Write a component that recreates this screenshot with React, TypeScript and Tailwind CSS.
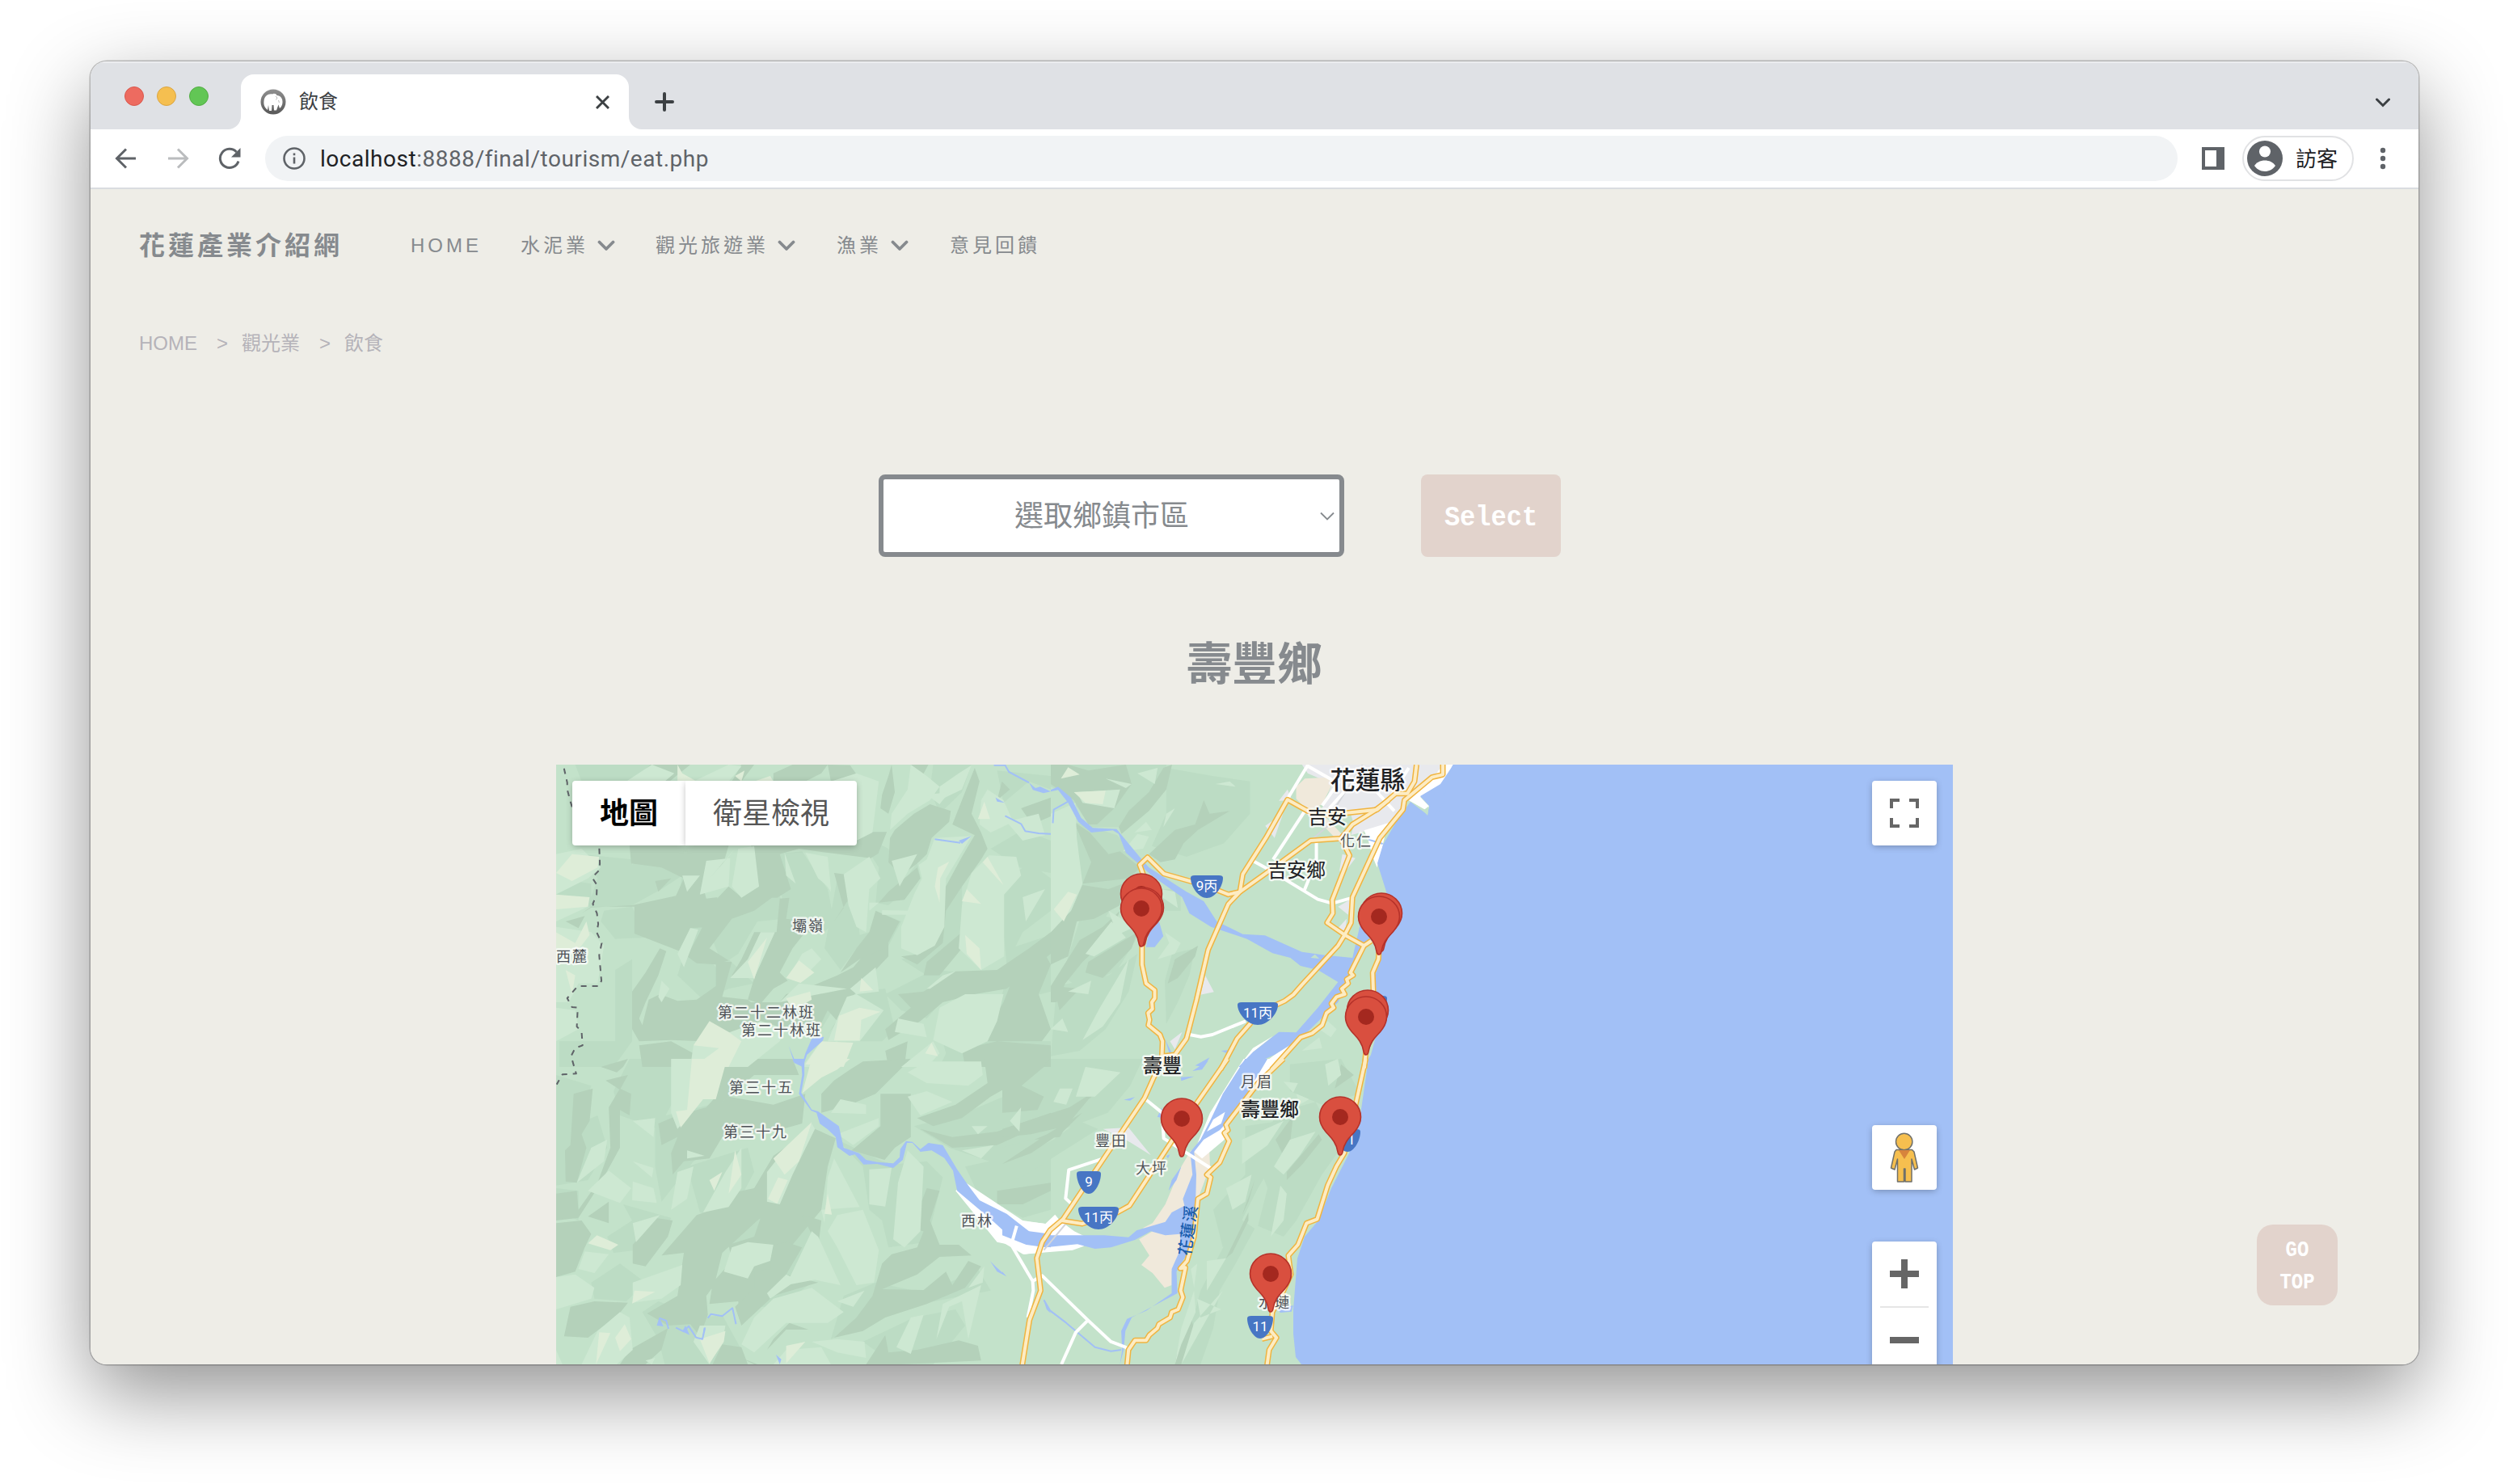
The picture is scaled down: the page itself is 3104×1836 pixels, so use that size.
import React from "react";

const CJK = "font-['Liberation_Sans','Noto_Sans_CJK_TC',sans-serif]";

/* The map is drawn in four sections, each with its own local grid. */
const SECTIONS = {
  nw: "translate(680 940) scale(0.3954 0.33333)",
  ne: "translate(1300 940) scale(0.35714 0.33333)",
  sw: "translate(680 1310) scale(0.3954 0.33333)",
  se: "translate(1240 1310) scale(0.3954 0.33333)",
} as const;
type Section = keyof typeof SECTIONS;
type Shape = [Section, string];

function Fills({ shapes, color, opacity = 1 }: { shapes: Shape[]; color: string; opacity?: number }) {
  return (
    <>
      {shapes.map(([s, d], i) => (
        <path key={i} d={d} transform={SECTIONS[s]} fill={color} fillOpacity={opacity} />
      ))}
    </>
  );
}

function Lines({ shapes, color, width, dash }: { shapes: Shape[]; color: string; width: number; dash?: string }) {
  return (
    <>
      {shapes.map(([s, d], i) => (
        <path key={i} d={d} transform={SECTIONS[s]} fill="none" stroke={color} strokeWidth={width} strokeDasharray={dash} strokeLinejoin="round" vectorEffect="non-scaling-stroke" />
      ))}
    </>
  );
}

const mid: Shape[] = [
  ["nw", "M80 18L320 18 240 80 100 80ZM100 350L258 370 258 545 120 545 150 440ZM20 440L130 460 130 540 20 500ZM258 390L300 340 415 430 350 480 258 540ZM170 560L258 545 300 660 205 665 160 600ZM205 780L258 740 258 1045 205 1045ZM30 1045L258 1045 200 1140 30 1140ZM415 430L530 400 470 520 490 640 410 720 395 560ZM560 500L720 500 735 590 650 600 590 720 540 760 500 640ZM440 640L470 700 520 770 560 740 640 830 560 850 480 890 400 800Z"],
  ["nw", "M700 350L790 340 870 480 890 600 860 640 740 590ZM900 440L960 540 970 650 1000 640 1040 570 1100 600 1060 690 1010 760 960 700 910 780 860 700ZM960 270L1060 330 1100 470 1150 380 1160 440 1060 540 1020 530 1030 400ZM1230 480L1290 440 1290 640 1220 720 1180 800 1100 740 1160 720ZM1420 460L1500 380 1568 440 1568 560 1480 640 1430 760 1420 640ZM1440 700L1568 650 1568 860 1440 900 1400 960 1420 850ZM1050 870L1200 780 1300 790 1240 880 1180 960 1100 930ZM1230 1045L1568 1045 1568 1140 1220 1140 1240 1090ZM960 860L1050 850 1080 1000 1040 1045 960 1045 930 960ZM1200 18L1320 18 1290 120 1220 200 1190 110ZM1400 40L1568 60 1568 110 1500 80 1420 160ZM1380 330L1480 260 1568 300 1568 420 1470 400ZM760 870L850 830 900 900 850 1000 780 960Z"],
  ["sw", "M20 60L130 100 90 240 150 210 180 330 120 450 20 470ZM250 0L380 0 390 150 340 260 220 210 200 120ZM20 480L90 490 90 600 20 560ZM230 540L380 590 340 700 200 720 180 660 258 600ZM130 830L220 760 300 830 240 900 140 890ZM330 220L540 160 520 320 450 380 350 530 330 400ZM430 400L620 330 640 420 560 600 470 570ZM550 570L700 500 730 560 660 680 560 700ZM900 300L1040 380 1100 400 1080 640 1000 560 980 400ZM1000 400L1180 380 1230 440 1180 680 1060 700ZM1140 250L1300 200 1420 140 1568 180 1568 300 1400 390 1250 330ZM1300 400L1568 330 1568 560 1480 590 1340 500ZM640 840L760 770 820 830 720 920 660 920ZM700 700L800 580 850 600 830 780 740 780ZM920 880L1020 830 1180 870 1340 780 1380 860 1160 910 960 1000 880 1040ZM980 1050L1140 960 1270 930 1300 990 1200 1134 1080 1134ZM290 940L340 900 480 960 540 950 600 1080 540 1134 360 1134 340 1040Z"],
  ["ne", "M0 18L400 18 400 110 340 180 240 250 140 250 60 130 0 100ZM400 30L560 60 690 80 690 200 600 310 470 360 350 320 400 200ZM80 230L230 280 320 400 240 500 180 600 100 560 60 400ZM110 560L260 600 300 660 230 780 100 850 40 800ZM20 840L200 800 300 720 270 860 190 1000 100 1080 0 1100ZM420 720L500 700 480 800 440 900 400 980 395 820ZM330 480L450 480 450 560 380 560Z"],
  ["se", "M0 0L440 0 400 100 330 200 220 250 120 290 0 330ZM0 390L160 300 240 230 300 260 180 350 60 440 0 460ZM760 250L870 230 870 340 800 480 740 620 690 700 660 560 760 430ZM860 200L980 160 1060 330 1000 430 920 600 880 660 800 620 830 480 790 360ZM620 860L740 590 790 630 730 760 660 900 600 1134 560 1134ZM540 1134L600 940 680 860 660 1000 620 1134ZM900 20L1060 0 1120 130 1000 170 900 120Z"],
];

const dark: Shape[] = [
  ["nw", "M315 18L440 18 375 80 260 80ZM600 18L640 18 600 80 570 80ZM760 18L870 18 850 50 800 80 700 80 700 50ZM870 18L940 20 1005 130 980 128 960 80 880 80ZM1040 130L1060 60 1070 18 1080 120 1060 200 1035 180ZM1130 18L1185 18 1165 62 1140 50Z"],
  ["nw", "M250 318L560 318 540 400 505 395 480 470 490 515 525 510 500 620 440 625 410 712 265 645 265 545 130 545 100 570 130 548 258 540 395 505 420 440 350 400 255 385ZM630 318L870 318 960 318 960 268 1055 268 1028 348 1005 365 870 345 780 330 720 350 755 480 712 512 695 512 640 560 570 590 500 700 560 745 520 760 460 755 430 730 470 640 520 520 560 470 600 510 655 470Z"],
  ["nw", "M720 515L750 512 740 590 810 600 860 645 800 640 760 700 720 790 745 820 700 850 660 905 620 890 640 810 570 800 600 740 640 640 710 640Z"],
  ["nw", "M258 860L300 790 345 700 365 710 340 800 300 900 280 960 290 985 310 890 345 870 400 895 460 890 520 840 520 750 570 750 540 880 620 890 630 900 720 900 740 870 800 850 900 800 950 770 1000 700 1040 600 1095 600 1060 670 1060 730 1020 780 1025 860 960 860 870 1020 900 970 870 930 840 1000 740 990 700 1050 560 1140 440 1140 480 1045 380 1040 280 1045 258 1000Z"],
  ["nw", "M890 420L925 425 945 500 890 600 920 550ZM1080 260L1140 200 1190 165 1255 190 1250 230 1195 290 1180 350 1150 385 1100 430 1060 380 1065 290ZM1260 240L1290 150 1330 30 1345 80 1320 200 1350 270 1370 330 1350 370 1290 470 1240 560 1230 680 1150 760 1100 730 1160 720 1230 600 1235 480 1290 360 1330 280ZM1150 400L1160 440 1110 520 1030 530 1060 490ZM1020 560L1095 600 1050 700 970 740 910 790 960 700 1000 640Z"],
  ["nw", "M1170 860L1270 785 1400 780 1500 700 1568 640 1568 720 1430 850 1330 870 1230 900 1160 970 1060 1040 1050 1000 1130 920 1090 870ZM1420 900L1480 720 1530 680 1568 760 1530 870 1568 1000 1540 1045 1370 1045 1390 960ZM1475 180L1568 140 1568 210 1510 240ZM1400 150L1415 80 1440 110ZM1290 1075L1400 1045 1568 1060 1568 1140 1300 1140ZM1170 800L1180 750 1290 640 1290 700 1220 800ZM280 1060L380 1045 450 1090 440 1140 290 1140ZM1050 1080L1120 1045 1110 1140 1060 1140ZM50 600L110 580 90 625ZM330 450L380 440 340 490Z"],
  ["sw", "M75 130L135 110 125 230 100 280 115 330 85 460 50 455 48 340 65 320ZM185 180L220 110 255 130 250 210 220 190 220 330 155 470 90 590 20 600 20 500 85 490 90 560 150 460 190 330ZM160 30L245 0 230 30 210 50ZM175 80L245 60 220 115ZM340 240L400 210 490 180 520 140 540 0 760 0 780 60 640 60 520 180 560 140 700 170 800 130 790 240 700 270 540 290 500 370 420 380 385 430 380 350 400 290 350 320Z"],
  ["sw", "M20 610L100 600 130 650 110 700 80 790 20 810ZM260 690L330 590 385 600 370 660 300 770 260 760ZM120 585L185 530 185 610ZM45 1030L65 920 140 900 245 905 215 950 120 1035ZM305 945L400 880 420 720 350 730 460 580 560 540 560 500 640 480 700 360 760 310 830 260 895 295 870 400 850 560 760 690 740 780 680 860 600 980 590 900 500 910 510 830 570 750 560 690 640 660 680 520 720 540 650 600 540 720 515 840 490 880 495 950 470 1030 440 985 370 990Z"],
  ["sw", "M850 130L890 80 940 40 980 10 1130 0 1020 130 940 170 850 200ZM1035 130L1130 130 1130 290 1080 330 1048 375 945 340 1035 250ZM1150 220L1270 170 1370 90 1360 0 1568 0 1500 60 1440 100 1380 140 1290 220 1200 250ZM1160 260L1260 290 1400 270 1568 200 1568 230 1400 320 1260 330ZM1400 490L1568 460 1568 490 1480 540 1400 540ZM850 600L840 700 790 580ZM740 680L790 700 740 800 840 830 700 880 600 990 580 920 640 850 640 790 690 780 700 690Z"],
  ["sw", "M890 1035L960 960 1010 880 1040 760 1070 725 1150 700 1170 640 1130 630 1180 480 1220 490 1190 600 1220 690 1280 690 1320 730 1220 735 1150 800 1040 855 1170 858 1240 790 1260 840 1310 750 1350 770 1300 850 1180 910 1050 960 980 1010ZM1150 1080L1280 1045 1340 1065 1350 1120 1100 1134 990 1134 1050 1025 1060 1090ZM700 1040L750 980 810 1005 740 1005 680 1080ZM250 1080L370 1000 350 1080 300 1134 220 1134ZM540 1060L600 1070 620 1134 510 1134ZM600 1110L650 1134 640 1134Z"],
  ["ne", "M0 18L60 18 130 40 260 18 280 90 220 180 160 240 130 240 80 150 0 90ZM390 30L420 18 400 110 340 190 245 275 235 250 270 190 340 120ZM530 150L550 200 620 190 510 260 460 310 430 370 380 380 340 350 430 260 500 240ZM80 230L135 270 200 350 240 340 310 400 270 440 110 460 140 380ZM110 465L200 480 250 460 240 540 150 590 90 600 60 730 0 760 0 640 70 560ZM240 560L200 660 110 750 50 830 20 900 0 900 0 840 100 670 180 620ZM130 750L300 640 280 700 180 810 120 790ZM10 840L100 850 30 930ZM430 740L510 690 500 730 440 810 405 830Z"],
  ["se", "M0 20L140 20 60 100 130 140 110 190 0 200ZM210 180L330 90 270 150 200 250 90 280 0 290 0 260ZM0 390L140 280 250 200 190 270 90 350ZM100 300L200 250 180 290ZM1060 20L1100 60 1040 110ZM855 300L910 210 900 320 880 360ZM890 420L990 280 1000 300 940 390 890 450ZM750 580L790 450 770 530ZM700 740L770 570 770 600 720 720ZM545 1100L590 960 605 1020 560 1134 540 1134Z"],
];

const light: Shape[] = [
  ["nw", "M240 80L320 18 390 50 360 80ZM450 80L560 18 600 25 560 80ZM880 80L960 50 1030 80 1010 270 960 300 960 120ZM1070 200L1120 110 1130 18 1180 60 1220 100 1190 150 1120 200 1065 260ZM1220 100L1280 50 1320 20 1290 110 1220 150ZM1205 290L1320 283 1240 440 1235 620 1205 690 1150 725 1100 700 1100 620 1140 500 1165 440 1155 390 1180 370ZM1320 420L1375 355 1460 360 1475 430 1422 500 1422 730 1350 780 1280 700 1290 540ZM1345 240L1350 150 1370 110 1420 150 1450 230 1380 270Z"],
  ["nw", "M490 375L565 365 560 470 470 500ZM590 330L640 320 655 470 600 512 570 470ZM735 345L770 460 740 430ZM800 345L870 360 880 480 840 440ZM920 425L1000 360 1035 440 1000 480 990 640 960 620 935 540ZM1000 530L1030 530 1000 560ZM1040 558L1130 560 1120 575 1040 575ZM1070 375L1150 350 1095 470ZM1430 230L1530 200 1550 280 1480 300ZM1480 510L1550 480 1490 600ZM660 640L705 640 640 810 565 810 620 740ZM580 330L500 440 560 360ZM820 700L850 740 800 800 745 810 790 720ZM415 430L470 430 430 490ZM440 625L465 630 420 770 400 720Z"],
  ["nw", "M20 350L100 330 160 400 120 440 20 500ZM20 500L120 545 20 600ZM20 620L130 640 170 690 150 830 90 830 60 900 20 900ZM20 920L80 930 90 1000 20 1045ZM350 820L375 850 350 900 340 880ZM1020 770L1030 860 960 870 940 850ZM1220 920L1300 870 1420 870 1400 970 1370 1045 1290 1090 1200 1040ZM1180 850L1230 800 1270 785 1190 850ZM930 880L960 870 1045 930 970 1045 870 1045 900 960ZM660 970L740 1000 720 1045 620 1140 440 1140 450 1060ZM930 850L800 880 720 900 780 830ZM1090 960L1170 980 1180 1030 1080 1010ZM1100 1140L1200 1045 1220 1090 1180 1140ZM840 1060L900 1045 900 1140 790 1140ZM870 370L880 490 840 420ZM1180 130L1250 120 1220 165Z"],
  ["sw", "M120 490L185 415 255 480 220 535ZM260 455L325 480 335 535 258 525ZM260 380L325 405 320 440ZM85 460L130 330 180 300 170 380ZM380 0L540 0 520 140 480 150 400 260 380 200ZM260 230L330 220 325 290ZM400 420L450 400 430 520 380 560ZM430 340L485 360 430 370ZM260 610L345 580 270 680ZM90 780L110 715 185 725 140 795ZM20 810L80 800 140 850 130 890 20 930ZM260 830L415 765 410 840 350 890 260 905ZM545 790L570 700 620 680 700 690 690 750 640 770 620 815Z"],
  ["sw", "M680 420L740 330 820 240 830 260 760 430 720 540 680 530ZM480 570L550 420 600 330 600 480 560 550ZM860 610L870 440 890 370 970 550 850 560ZM870 640L900 580 980 560 1030 710 1015 830 960 840 900 700ZM1000 410L1070 405 1050 548 1000 540ZM1090 460L1120 340 1170 400 1160 640 1110 700 1075 670ZM740 840L820 640 840 660 910 840 830 820ZM680 870L740 800 775 820 690 890ZM640 960L700 890 820 850 920 940 870 980 740 980 640 1090 600 1060ZM880 200L910 150 990 170 990 205ZM900 280L1030 220 1030 250 950 320ZM1120 140L1180 120 1260 160 1160 210ZM1120 50L1180 10 1350 10 1355 60 1310 100 1180 90Z"],
  ["sw", "M1230 910L1350 840 1310 1040 1290 900 1250 920 1210 1040ZM1130 960L1170 950 1130 1095 1085 1070ZM820 1050L900 1040 985 1050 990 1110 900 1090ZM700 1134L740 1080 850 1070 880 1134ZM1290 340L1390 320 1350 370ZM1440 230L1475 180 1470 270ZM1320 250L1370 250 1340 280ZM900 900L985 860 950 920ZM450 1050L470 990 550 990 540 1050 500 1134ZM100 1134L150 1010 220 940 250 960 260 1080 210 1134ZM20 1080L40 1134 20 1134ZM300 1120L330 1110 320 1134ZM1310 850L1360 770 1355 830Z"],
  ["ne", "M90 120L240 110 220 180 110 160ZM190 70L280 90 260 105ZM300 50L370 30 360 90ZM330 230L350 260 290 270ZM0 200L85 160 90 290 110 460 70 560 0 640ZM300 275L340 285 320 330 250 340ZM400 200L430 180 390 250ZM570 90L620 80 640 100ZM200 560L290 620 230 650ZM120 720L210 600 260 660 150 730ZM170 920L270 740 240 900 180 990 110 1040ZM60 860L140 820 130 870ZM395 640L450 680 430 720 370 740 410 680ZM330 470L430 490 440 550ZM930 1000L960 970 990 1000 970 1030ZM0 1000L40 960 60 1010ZM870 1080L930 1030 940 1070Z"],
  ["se", "M180 110L220 110 200 170 160 160ZM260 30L370 50 290 140 230 140ZM750 300L880 230 830 320 750 390ZM700 480L780 430 760 530 720 560ZM850 400L900 300 980 270 930 360 880 430ZM840 660L870 470 890 500 880 600ZM880 85L925 90 910 125ZM920 130L960 150 930 170ZM540 1134L560 1000 600 860 605 940 560 1060ZM560 1134L690 860 600 980ZM620 960L610 890 685 930ZM640 750L700 740 640 860ZM1010 20L1050 0 1060 60 1020 100ZM590 780L610 760 600 850Z"],
];

const cream: Shape[] = [
  ["nw", "M400 18L415 50 460 80 400 80ZM690 60L700 80 640 80ZM580 60L610 40 600 80ZM70 350L155 360 150 400 70 450 20 420ZM20 500L125 510 120 545 20 555ZM20 640L80 680 115 600 125 650 80 720 20 700ZM50 780L80 800 70 870ZM1215 400L1250 378 1222 440 1220 530 1205 470ZM1355 380L1370 360 1420 465 1400 440ZM1305 480L1350 535 1290 525ZM1300 650L1345 700 1350 780 1305 720ZM1360 155L1378 220 1340 220ZM680 660L640 815 620 750ZM780 745L828 790 785 828 740 810ZM975 810L1012 855 970 860ZM905 950L970 920 1035 935 975 965 970 1042 890 1042ZM500 970L560 1010 600 1045 560 1140 450 1140 530 1070 450 1060ZM1195 1050L1215 1100 1175 1090ZM800 1130L850 1045 950 1050 920 1140ZM740 885L815 860 820 890 760 930Z"],
  ["sw", "M445 0L555 0 520 150 480 150 410 255 395 195 430 190ZM815 20L860 0 940 0 900 40 850 70 790 128ZM700 370L820 235 780 380 735 430ZM715 440L745 450 712 538 683 520ZM580 340L600 430 560 500ZM500 450L540 420 515 490ZM148 655L215 690 190 710 120 685ZM265 860L330 865 258 908ZM155 1015L190 1018 145 1134ZM235 985L255 1040 220 1085 205 1035ZM470 1040L550 1010 545 1050 500 1130ZM870 500L883 578 860 575ZM740 1065L800 1050 740 1130Z"],
  ["ne", "M60 28L100 55 35 70ZM80 120L190 115 180 165 120 160ZM10 555L60 490 90 500 45 600Z"],
];

const white: Shape[] = [
  ["sw", "M1305 462L1480 600 1568 615 1568 715 1485 725 1440 690 1400 680 1270 490Z"],
  ["se", "M0 550L50 600 135 612 165 578 180 600 225 640 255 657 255 695 220 710 65 725 0 680Z"],
  ["se", "M755 0L880 0 785 115 700 245 695 300 625 370 600 345 650 200Z"],
  ["ne", "M700 1070L770 1025 700 1085 680 1140 650 1140ZM775 1095L865 1030 865 1040 775 1140 720 1140Z"],
  ["ne", "M1395 18L1398 18 1350 95 1280 138 1310 172 1305 190 1240 150 1320 70 1360 18ZM1085 262L1168 235 1150 315 1100 300ZM1100 300L1152 312 1130 400 1115 360Z"],
];

const sand: Shape[] = [
  ["se", "M590 340L648 345 650 400 612 520 600 660 560 740 530 790 530 840 508 850 470 795 435 765 460 730 428 670 470 640 440 628 470 610 510 540 560 400Z"],
  ["ne", "M850 100L880 70 960 65 975 90 940 165 890 190 850 145ZM870 190L950 210 1020 290 980 285 945 245Z"],
];

const urban: Shape[] = [
  ["ne", "M870 18L1358 18 1330 65 1230 150 1190 235 1040 280 1050 240 1040 205 940 180 975 90 890 50Z"],
  ["ne", "M820 110L835 150 790 152ZM743 245L805 198 775 290ZM518 872L535 800 565 862ZM995 545L1038 518 1030 575ZM988 632L1025 590 1020 640ZM1000 410L1010 350 1055 365 1010 430ZM413 1045L455 1010 430 1075Z"],
  ["se", "M315 260L395 255 465 358 400 310 370 290Z"],
];

const water: Shape[] = [
  ["ne", "M0 112L25 100 70 140 105 215 145 253 228 257 315 370 340 400 420 455 470 490 530 525 575 600 665 647 742 652 870 713 950 725 1045 735 1072 610 1125 620 1110 675 1085 700 995 900 865 1035 775 1095 680 1140 650 1140 700 1085 790 1010 850 1012 925 920 995 825 925 780 865 765 830 735 768 718 680 665 555 620 480 570 455 510 350 430 260 345 235 275 215 262 140 270 95 230 60 160 25 112 0 118Z"],
  ["ne", "M330 695L360 695 390 655 375 600 340 640ZM395 1035L422 1095 412 1095ZM500 1135L550 1105 530 1140ZM590 1080L640 1075 610 1090Z"],
  ["se", "M0 570L80 640 130 655 320 655 395 662 420 637 510 605 530 570 570 545 565 520 595 430 590 370 585 350 620 300 650 230 690 130 760 0 830 0 770 120 725 200 700 240 680 265 630 300 600 345 607 430 605 520 600 660 580 720 545 790 548 870 405 960 385 1010 380 1080 368 1134 375 1080 372 1010 390 965 450 935 530 870 530 780 560 700 555 650 510 655 465 640 415 672 340 700 290 705 235 688 135 700 75 690 0 655Z"],
  ["se", "M560 400L545 450 520 490 530 450ZM380 152L415 142 400 155ZM595 45L645 5 625 40ZM558 68L600 65 560 82ZM860 930L910 915 905 938 870 942ZM485 215L500 180 500 220ZM513 360L525 355 518 370ZM0 790L12 806 0 798Z"],
  ["sw", "M762 0L797 0 797 60 787 125 820 188 840 195 905 250 920 330 968 350 990 375 1025 383 1075 388 1095 365 1097 335 1115 305 1135 308 1160 335 1185 312 1230 320 1275 410 1310 470 1345 525 1430 575 1500 640 1568 650 1568 700 1490 685 1440 660 1385 600 1275 490 1262 415 1235 368 1195 340 1160 345 1135 312 1118 312 1105 375 1075 405 1025 390 982 392 955 355 938 360 900 328 895 290 870 262 845 240 835 200 818 192 780 130 790 60 788 25 762 10Z"],
  ["sw", "M335 990L343 960 356 993ZM415 1012L425 990 438 1025ZM478 1035L482 998 488 996ZM1378 750L1395 770 1430 808 1400 790ZM1545 895L1568 945 1555 930ZM708 1098L725 1115 720 1134Z"],
  ["nw", "M748 1062L765 1110 790 1130 800 1090 820 1035 858 1028 855 1042 805 1095 792 1140 765 1125ZM1500 85L1520 105 1535 100 1568 118 1545 124 1512 112ZM1280 300L1320 283 1290 312ZM1395 140L1424 160 1400 155Z"],
];

const streams: Shape[] = [
  ["nw", "M1390 20L1425 20 1437 45 1500 85M1425 208L1475 238 1488 265 1530 273 1568 275M1205 295L1285 308"],
  ["ne", "M7 235L10 185 65 152M1395 20L1365 95 1362 155 1330 210M1100 296L1150 312"],
  ["sw", "M343 962L365 972 372 1002M395 998L420 1012 435 992 458 1034 478 1040 486 1000M495 962L505 947 540 955 572 925 583 985"],
  ["se", "M130 895L150 935 200 980 290 1070 340 1085 372 1080"],
];

const streets: Shape[] = [
  ["ne", "M890 20L820 145M885 20L975 75M880 190L770 370M700 375L760 410 805 440 925 518 975 533 1045 512M920 305L920 385M895 440L878 485M480 1020L520 1028 560 1020 675 970M1000 80L940 170M1015 120L965 180M1130 120L1190 190M1240 30L1170 150"],
  ["se", "M448 150L500 200 505 295 655 408M315 370L208 412 198 518 222 545M45 620L28 690 95 825 97 860 80 960M95 825L125 805 268 970 340 1050 385 1070 397 1080M268 970L230 1015 185 1134"],
];

const roads: Shape[] = [
  ["ne", "M320 425L308 390 335 362 392 423 540 468 615 500 655 490"],
  ["ne", "M1267 18L1260 80 1235 125 1195 125 1130 185 960 205 890 190 820 148 745 290 665 425 655 490 615 535 545 705 505 890 470 1035 430 1095 385 1100 378 1140"],
  ["ne", "M655 490L760 410 900 300 1005 292 1045 240 1120 190 1170 150"],
  ["ne", "M1005 292L1035 355 975 520 977 570 957 605 1018 650 1085 690 1110 672"],
  ["ne", "M1358 18L1358 55 1320 65 1225 150 1220 185 1140 290 1045 510 1040 605 1018 650 995 690 870 835 840 872 810 895 720 940 690 980 645 1035 588 1150"],
  ["ne", "M1085 690L1038 790 1047 800 1025 815 1030 830 1008 850 1018 870 990 880 972 905 980 920 955 940 940 985 905 1015 865 1030 765 1150"],
  ["ne", "M316 680L316 760 330 830 360 855 360 885 350 900 352 925 337 940 342 965 338 985 378 1020 387 1045 385 1100"],
  ["ne", "M1137 700L1135 740 1115 790 1118 880M1092 1080L1086 1145"],
  ["se", "M705 0L605 170 525 315 398 545 360 570 250 612 185 600"],
  ["se", "M880 0L800 90 700 245 706 265 695 275 710 305 680 385 640 430 652 440 640 500 612 520 600 660 578 750 557 778 573 775 558 860 565 885 550 930 530 940 525 960 490 985 485 1000 460 1025 450 1045 415 1045 395 1080 390 1140"],
  ["se", "M500 0L445 145 235 515 190 595 150 635 125 680 108 740 120 860 85 970 62 1140"],
  ["se", "M1137 0L1100 200 1070 350 1045 400 1018 470 985 595 952 610 925 690 895 730 903 800 880 860 845 940 840 1010 858 1035 835 1080 828 1140M812 1040L845 1030"],
];

const county: Shape[] = [
  ["nw", "M45 32L55 85 55 110 65 155 85 230 155 320 157 385 155 410 133 437 148 465 147 500 135 535 148 570 152 610 147 640 163 680 155 725 162 820 155 840 88 840 55 885 70 918 88 920 85 990 100 1010 103 1060 80 1070 67 1100 83 1165 40 1168 22 1205"],
];

type Label = { t: string; x: number; y: number; s: number; c: string; w?: number; ls?: number };
const small = { s: 18, c: "#4d5156", ls: 2 };
const labels: Label[] = [
  { t: "花蓮縣", x: 1692, y: 965, s: 31, c: "#202124", w: 500 },
  { t: "吉安", x: 1642, y: 1010, s: 24, c: "#202124" },
  { t: "吉安鄉", x: 1604, y: 1076, s: 24, c: "#202124" },
  { t: "化仁", x: 1678, y: 1040, ...small },
  { t: "壩嶺", x: 1000, y: 1145, ...small },
  { t: "西麓", x: 708, y: 1183, ...small },
  { t: "第二十二林班", x: 948, y: 1252, ...small },
  { t: "第二十林班", x: 967, y: 1274, ...small },
  { t: "第三十五", x: 942, y: 1345, ...small },
  { t: "第三十九", x: 935, y: 1400, ...small },
  { t: "西林", x: 1209, y: 1510, ...small },
  { t: "壽豐", x: 1438, y: 1318, s: 24, c: "#202124", w: 500 },
  { t: "月眉", x: 1555, y: 1338, ...small },
  { t: "壽豐鄉", x: 1571, y: 1372, s: 24, c: "#202124", w: 500 },
  { t: "豐田", x: 1375, y: 1411, ...small },
  { t: "大坪", x: 1425, y: 1445, ...small },
  { t: "水璉", x: 1577, y: 1611, ...small },
];

const shields = [
  { t: "9丙", x: 1493, y: 1097, w: 40 },
  { t: "11丙", x: 1556, y: 1254, w: 50 },
  { t: "9", x: 1347, y: 1463, w: 30 },
  { t: "11丙", x: 1359, y: 1507, w: 50 },
  { t: "11", x: 1559, y: 1642, w: 32 },
  { t: "11", x: 1667, y: 1411, w: 32 },
  { t: "11", x: 1700, y: 1246, w: 32 },
];

const pins: [number, number][] = [
  [1412, 1154], [1414, 1171], [1412, 1172],
  [1709, 1178], [1706, 1182],
  [1692, 1298], [1690, 1306],
  [1462, 1432], [1658, 1430], [1572, 1624],
];

function TerrainMap() {
  return (
    <svg viewBox="688 946 1728 742" className="block h-[742px] w-[1728px]">
      <rect x="688" y="946" width="1728" height="742" fill="#c3e2ca" />
      <Fills shapes={mid} color="#bcdcc4" />
      <Fills shapes={dark} color="#b4d1ba" />
      <Fills shapes={light} color="#cde8d2" />
      <Fills shapes={cream} color="#deedd8" />
      <Fills shapes={urban} color="#e8e9ed" />
      <Fills shapes={sand} color="#f0e9db" />
      <Fills shapes={white} color="#ffffff" />
      <Fills shapes={water} color="#a2c0f6" />
      <path
        d="M1798 946L1782 970 1757 985 1768 997 1766 1008 1745 992 1730 1012 1711 1045 1704 1068 1715 1103 1716 1127 1707 1190 1701 1207 1703 1233 1708 1260 1696 1305 1693 1310 1681 1393 1669 1427 1647 1470 1631 1510 1614 1530 1605 1557 1600 1620 1600 1650 1603 1679 1610 1688H2416V946Z"
        fill="#a2c0f6"
      />
      <Fills shapes={[["se", "M640 270L660 225 697 197 685 240Z"]]} color="#ffffff" />
      <Fills shapes={[["ne", "M1240 150L1275 138 1310 172 1305 190Z"]]} color="#ffffff" />
      <Fills shapes={[["ne", "M1290 188L1310 172 1305 207ZM900 735L915 722 930 738Z"]]} color="#c3e2ca" />
      <Lines shapes={streams} color="#a2c0f6" width={2} />
      <Lines shapes={county} color="#5f6368" width={2} dash="7 7" />
      <Lines shapes={[["se", "M200 610L130 710"], ["ne", "M900 300L960 245M1080 18L990 170"]]} color="#d3d5da" width={2} />
      <Lines shapes={streets} color="#ffffff" width={4} />
      <Lines shapes={roads} color="#f0b440" width={7} />
      <Lines shapes={roads} color="#fdecc3" width={4} />
      <g fontFamily="Roboto, 'Noto Sans CJK TC', sans-serif" textAnchor="middle">
        {labels.map((l) => (
          <text key={l.t} x={l.x} y={l.y + l.s * 0.37} fontSize={l.s} fill={l.c} fontWeight={l.w ?? 400} letterSpacing={l.ls ?? 0} stroke="#ffffff" strokeOpacity={0.75} strokeWidth={5} strokeLinejoin="round" paintOrder="stroke">
            {l.t}
          </text>
        ))}
        <text transform="translate(1477 1523) rotate(-82)" fontSize={20} letterSpacing={1} fill="#1a5dae" fontWeight={500}>
          花蓮溪
        </text>
        {shields.map((s, i) => (
          <g key={i} transform={`translate(${s.x} ${s.y})`}>
            <path
              d={`M${-s.w / 2} -11Q${-s.w / 2} -14 ${-s.w / 2 + 5} -14H${s.w / 2 - 5}Q${s.w / 2} -14 ${s.w / 2} -11C${s.w / 2} 0 ${s.w / 4} 14 0 14C${-s.w / 4} 14 ${-s.w / 2} 0 ${-s.w / 2} -11Z`}
              fill="#4776c4"
            />
            <text y={5} fontSize={17} fill="#ffffff">{s.t}</text>
          </g>
        ))}
      </g>
      {pins.map(([x, y], i) => (
        <g key={i} transform={`translate(${x} ${y})`}>
          <path
            d="M0 -1C-1.5 -1 -2.5 -2 -3 -5C-5 -18 -13 -24 -18 -30C-23 -36 -25.5 -41 -25.5 -48A25.5 25 0 0 1 25.5 -48C25.5 -41 23 -36 18 -30C13 -24 5 -18 3 -5C2.500 -2 1.5 -1 0 -1Z"
            fill="#d94f3f"
            stroke="#b5322a"
            strokeWidth="1.6"
          />
          <circle cy="-48" r="10" fill="#a4281f" />
        </g>
      ))}
    </svg>
  );
}

function NavChevron() {
  return (
    <svg viewBox="0 0 22 14" className="h-[14px] w-[22px]" fill="none" stroke="#868a8e" strokeWidth="3.8" strokeLinecap="round" strokeLinejoin="round">
      <path d="M2.500 2.500 11 11 19.500 2.500" />
    </svg>
  );
}

function TabStrip() {
  return (
    <div className="flex h-[84px] items-start bg-[#dfe1e5] pl-[42px] pr-[35px] shadow-[inset_0_2px_0_#ebecef]">
      <div className="flex gap-4 pt-[31px]">
        <i className="size-6 rounded-full border border-[#d9574c] bg-[#ed6b60]" />
        <i className="size-6 rounded-full border border-[#dba541] bg-[#f5bf50]" />
        <i className="size-6 rounded-full border border-[#52ac43] bg-[#62c655]" />
      </div>
      <div className="relative ml-[40px] mt-4 flex h-[68px] w-[480px] items-center rounded-t-[16px] bg-white pl-[24px] pr-[24px]">
        <svg viewBox="0 0 16 16" className="absolute -left-4 bottom-0 size-4 fill-white"><path d="M16 0V16H0A16 16 0 0 0 16 0Z" /></svg>
        <svg viewBox="0 0 16 16" className="absolute -right-4 bottom-0 size-4 fill-white"><path d="M0 0V16H16A16 16 0 0 1 0 0Z" /></svg>
        <svg viewBox="0 0 32 32" className="size-8">
          <defs>
            <linearGradient id="fav" x1="0" y1="0" x2="0" y2="1">
              <stop offset="0" stopColor="#909090" />
              <stop offset="1" stopColor="#585858" />
            </linearGradient>
          </defs>
          <circle cx="16" cy="16" r="15.500" fill="url(#fav)" />
          <path d="M9 26C5 23 4 19 4.500 15 5 9 10 5.500 15 6.500 16.500 5 20 6 20.500 8 25 8 28 12 27.500 17 27.300 20 26 22.500 24 24L22.500 19.500 20 26.500H17L16.500 20 14.500 20 14 27H11L10 20Z" fill="#fff" />
          <path d="M19 9L21 11 19.500 13.500M22.500 14L23.500 17" stroke="#aaa" strokeWidth="0.800" fill="none" />
        </svg>
        <span className="ml-[16px] text-2xl text-[#3c4043]">飲食</span>
        <svg viewBox="0 0 17 17" className="ml-auto size-[17px]" stroke="#3c4043" strokeWidth="2.900"><path d="M1 1 16 16M16 1 1 16" /></svg>
      </div>
      <svg viewBox="0 0 24 24" className="ml-[32px] mt-[38px] size-6" stroke="#3c4043" strokeWidth="4" strokeLinecap="round"><path d="M12 2V22M2 12H22" /></svg>
      <svg viewBox="0 0 18 12" className="ml-auto mt-[45px] h-3 w-[18px]" fill="none" stroke="#3c4043" strokeWidth="3" strokeLinecap="round"><path d="M1.500 2 9 9.500 16.500 2" /></svg>
    </div>
  );
}

function Toolbar() {
  return (
    <div className="flex h-[74px] items-center border-b-2 border-[#dadce0] bg-white pl-[30px] pr-[40px]">
      <svg viewBox="0 0 28 28" className="size-7" fill="none" stroke="#5f6368" strokeWidth="3"><path d="M26 14H3M14 2.500 2.500 14 14 25.500" /></svg>
      <svg viewBox="0 0 28 28" className="ml-[36px] size-7" fill="none" stroke="#babcbe" strokeWidth="3"><path d="M2 14H25M14 2.500 25.500 14 14 25.500" /></svg>
      <svg viewBox="0 0 28 28" className="ml-[36px] size-7" fill="none" stroke="#5f6368" strokeWidth="3">
        <path d="M25 17.500A11.600 11.600 0 1 1 22.500 6" />
        <path d="M27.500 1V12.500H16Z" fill="#5f6368" stroke="none" />
      </svg>
      <div className="ml-[30px] flex h-14 w-[2366px] items-center rounded-full bg-[#f1f3f5] pl-[22px]">
        <svg viewBox="0 0 28 28" className="size-7" fill="none" stroke="#5f6368" strokeWidth="2.600">
          <circle cx="14" cy="14" r="12.500" />
          <path d="M14 12.500V20.500M14 7.500V10.200" />
        </svg>
        <span className="ml-[18px] pt-0.5 font-[Roboto] text-[28px] tracking-[0.53px] text-[#5f6368]">
          <span className="text-[#202124]">localhost</span>:8888/final/tourism/eat.php
        </span>
      </div>
      <svg viewBox="0 0 28 28" className="ml-[30px] size-7"><path d="M0 0H28V28H0ZM4 4V24H18V4Z" fill="#5f6368" fillRule="evenodd" /></svg>
      <div className="ml-[22px] flex h-14 w-[138px] items-center rounded-full border-2 border-[#e1e2e4] pl-1">
        <svg viewBox="0 0 44 44" className="size-11">
          <circle cx="22" cy="22" r="22" fill="#5f6368" />
          <circle cx="22" cy="13.500" r="7" fill="#fff" />
          <path d="M9 31C12 26.500 17 24.500 22 24.500S32 26.500 35 31C32 35.500 27 38 22 38S12 35.500 9 31Z" fill="#fff" />
        </svg>
        <span className="ml-[16px] pt-0.5 text-[26px] text-[#202124]">訪客</span>
      </div>
      <svg viewBox="0 0 8 28" className="ml-[32px] h-7 w-2 fill-[#5f6368]"><circle cx="4" cy="4" r="3.200" /><circle cx="4" cy="14" r="3.200" /><circle cx="4" cy="24" r="3.200" /></svg>
    </div>
  );
}

function MapButton({ className, children }: { className: string; children: React.ReactNode }) {
  return <div className={`absolute flex items-center justify-center bg-white shadow-[0_2px_8px_-1px_rgba(0,0,0,0.3)] ${className}`}>{children}</div>;
}

function MapPanel() {
  return (
    <div className="relative mx-auto h-[742px] w-[1728px] shrink-0 overflow-hidden">
      <TerrainMap />
      <MapButton className="left-5 top-5 h-20 w-[140px] rounded-l pt-0.5 text-4xl text-black">
        <span className="font-bold">地圖</span>
      </MapButton>
      <MapButton className="left-[160px] top-5 h-20 w-[212px] rounded-r pt-0.5 text-4xl text-[#565656]">衛星檢視</MapButton>
      <MapButton className="right-5 top-5 size-20 rounded">
        <svg viewBox="0 0 36 36" className="size-9" fill="none" stroke="#666" strokeWidth="4"><path d="M2 12V2H12M24 2H34V12M34 24V34H24M12 34H2V24" /></svg>
      </MapButton>
      <MapButton className="right-5 top-[446px] size-20 rounded">
        <svg viewBox="0 0 36 62" className="h-[62px] w-9" fill="#f6bf4f" stroke="#70706a" strokeWidth="1.500" strokeLinejoin="round">
          <path d="M8 21.500H27.500L30 24 34.500 44 30.500 46 27 33V61H19V45H17.500V61H9.500V33L6 46 1.500 44 6 24Z" />
          <circle cx="17.700" cy="11.500" r="10.200" />
          <path d="M11 22H25L18 33Z" fill="#d7843c" stroke="none" />
        </svg>
      </MapButton>
      <MapButton className="right-5 top-[590px] h-[162px] w-20 flex-col rounded">
        <div className="flex h-20 items-center"><svg viewBox="0 0 36 36" className="size-9 fill-[#666]"><path d="M14 0H22V14H36V22H22V36H14V22H0V14H14Z" /></svg></div>
        <div className="h-0.5 w-[60px] bg-[#e6e6e6]" />
        <div className="flex h-20 items-center"><div className="h-2 w-9 bg-[#666]" /></div>
      </MapButton>
    </div>
  );
}

function Site() {
  return (
    <div className="relative flex h-[1454px] flex-col bg-[#eeede7] text-[#868a8e]">
      <nav className="flex h-[140px] items-center pl-[60px] text-2xl tracking-[4px]">
        <span className="text-[32px] font-bold">花蓮產業介紹網</span>
        <span className="ml-[84px]">HOME</span>
        <span className="ml-[48px] flex items-center gap-[11px]">水泥業<NavChevron /></span>
        <span className="ml-[50px] flex items-center gap-[11px]">觀光旅遊業<NavChevron /></span>
        <span className="ml-[51px] flex items-center gap-[11px]">漁業<NavChevron /></span>
        <span className="ml-[51px]">意見回饋</span>
      </nav>
      <div className="flex h-[100px] items-center pl-[60px] pt-0.5 text-2xl text-[#b5b3b9]">
        <span>HOME</span>
        <span className="ml-[24px]">&gt;</span>
        <span className="ml-[17px]">觀光業</span>
        <span className="ml-[24px]">&gt;</span>
        <span className="ml-[17px]">飲食</span>
      </div>
      <div className="mt-[113px] flex gap-[95px] pl-[975px]">
        <div className="flex h-[102px] w-[576px] items-center rounded-lg border-[6px] border-[#868a8e] bg-white pl-[162px] pr-[6px] pt-0.5 text-4xl">
          選取鄉鎮市區
          <svg viewBox="0 0 18 12" className="ml-auto h-3 w-[18px]" fill="none" stroke="#868a8e" strokeWidth="1.800"><path d="M1 1.500 9 9.500 17 1.500" /></svg>
        </div>
        <div className="flex h-[102px] w-[173px] items-center justify-center rounded-lg bg-[#e2d3cc] pt-1.5 font-['Liberation_Mono',monospace] text-[32px] font-bold text-white">
          <span className="scale-y-[1.12]">Select</span>
        </div>
      </div>
      <h1 className="mt-[91px] flex h-[84px] items-center justify-center text-[56px] font-bold leading-none">壽豐鄉</h1>
      <div className="h-[82px] shrink-0" />
      <MapPanel />
      <div className="absolute bottom-[73px] right-[100px] flex size-[100px] flex-col items-center justify-center rounded-[20px] bg-[#e2d3cc] pt-1 font-['Liberation_Mono',monospace] text-2xl font-bold leading-10 text-white">
        <span className="scale-y-[1.12]">GO</span>
        <span className="scale-y-[1.12]">TOP</span>
      </div>
    </div>
  );
}

export default function App() {
  return (
    <div className={`h-[1836px] w-[3104px] overflow-hidden bg-white px-[112px] pt-[76px] ${CJK}`}>
      <div className="h-[1612px] w-[2880px] rounded-[20px] shadow-[0_0_0_1.5px_rgba(0,0,0,0.22),0_36px_100px_rgba(0,0,0,0.43)]">
        <div className="h-full overflow-hidden rounded-[20px]">
          <TabStrip />
          <Toolbar />
          <Site />
        </div>
      </div>
    </div>
  );
}
